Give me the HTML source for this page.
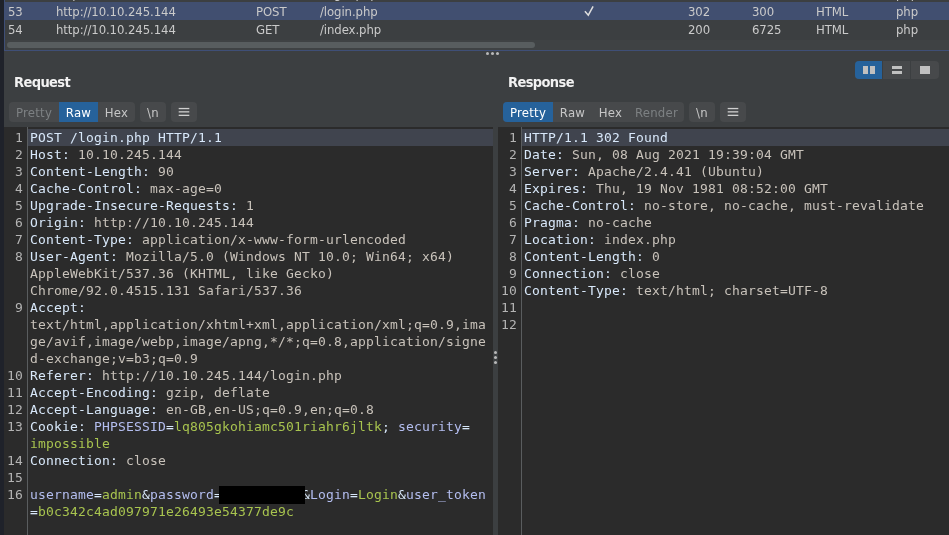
<!DOCTYPE html>
<html lang="en">
<head>
<meta charset="utf-8">
<title>Burp Suite - HTTP history</title>
<style>
html,body{margin:0;padding:0;}
body{width:949px;height:535px;overflow:hidden;position:relative;background:#3c3f41;
  font-family:"DejaVu Sans Condensed","DejaVu Sans","Liberation Sans",sans-serif;font-stretch:condensed;font-size:13px;color:#d4d4d4;}
#root{position:absolute;left:0;top:0;width:949px;height:535px;will-change:transform;}
.abs{position:absolute;}
#strip{left:0;top:0;width:4px;height:535px;background:#1f222a;}
/* history table */
#table{left:4px;top:0;width:945px;height:51px;box-sizing:border-box;border-left:1px solid #3f4f77;border-bottom:1px solid #3f4f77;overflow:hidden;}
.row{position:absolute;left:0;width:945px;height:18px;line-height:18px;white-space:nowrap;color:#cacaca;}
.row span{position:absolute;top:1px;letter-spacing:-0.08px;}
.row.sel{background:#414f70;}
.c1{left:3px}.c2{left:51px}.c3{left:251px}.c4{left:315px}.c5{left:579px}.c6{left:683px}.c7{left:747px}.c8{left:811px}.c9{left:891px}
#hthumb{left:2px;top:42px;width:528px;height:6px;border-radius:3px;background:#585d5f;}
/* titles */
.title{font-family:"DejaVu Sans Condensed","DejaVu Sans","Liberation Sans",sans-serif;font-weight:bold;font-size:14.5px;color:#f2f2f2;line-height:18px;letter-spacing:-0.62px;}
/* tabs */
.grp{position:absolute;top:102px;height:20px;border-radius:4px;background:#47494b;overflow:hidden;}
.grp span{position:absolute;top:0;height:20px;line-height:22px;text-align:center;color:#c6c6c6;font-size:13px;letter-spacing:0.25px;}
.grp span.on{background:#26629b;color:#ffffff;}
.grp span.dis{color:#7d8183;}
/* editors */
.ed{position:absolute;top:127px;height:408px;background:#2b2b2b;overflow:hidden;font-family:"DejaVu Sans Mono","Liberation Mono",monospace;font-size:13px;font-stretch:normal;letter-spacing:0.1733px;}
.gut{position:absolute;left:0;top:0;width:23px;height:408px;border-right:1px solid #5a5d5f;background:#2b2b2b;}
.ln{position:absolute;left:0;width:19px;text-align:right;height:17px;line-height:17px;color:#b4b4b4;}
.tl{position:absolute;left:26px;height:17px;line-height:17px;white-space:pre;color:#c8c2ba;}
.cur{position:absolute;left:24px;right:0;top:2px;height:17px;background:#40444e;}
.hb{position:absolute;left:7px;top:5px;}
.h{color:#d8e8fa;}
.n{color:#b4bef0;}
.v{color:#a8c44f;}
.blk{}
</style>
</head>
<body>
<div id="root">
<div id="strip" class="abs"></div>

<div id="table" class="abs">
  <div class="row" style="top:-16px"><span class="c1">52</span><span class="c2">http://10.10.245.144</span><span class="c3">GET</span><span class="c4">/login.php</span><span class="c6">200</span><span class="c7">1851</span><span class="c8">HTML</span><span class="c9">php</span></div>
  <div class="row sel" style="top:2px"><span class="c1">53</span><span class="c2">http://10.10.245.144</span><span class="c3">POST</span><span class="c4">/login.php</span><svg class="abs" style="left:575px;top:0;" width="20" height="18" viewBox="0 0 20 18" role="img" aria-label="✓"><title>✓</title><polyline points="4.9,9.3 8.3,13.2 13.1,4.3" fill="none" stroke="#dedede" stroke-width="1.5" stroke-linejoin="miter"/></svg><span class="c6">302</span><span class="c7">300</span><span class="c8">HTML</span><span class="c9">php</span></div>
  <div class="row" style="top:20px"><span class="c1">54</span><span class="c2">http://10.10.245.144</span><span class="c3">GET</span><span class="c4">/index.php</span><span class="c6">200</span><span class="c7">6725</span><span class="c8">HTML</span><span class="c9">php</span></div>
  <div class="abs" style="left:0;top:40px;width:945px;height:10px;background:#3f4244;"></div>
  <div id="hthumb" class="abs"></div>
</div>

<!-- splitter dots -->
<div class="abs" style="left:486px;top:52px;width:3px;height:3px;border-radius:2px;background:#b8b8b8;box-shadow:5px 0 0 #b8b8b8,10px 0 0 #b8b8b8;"></div>

<div class="abs title" style="left:14px;top:73px;">Request</div>
<div class="abs title" style="left:508px;top:73px;">Response</div>

<!-- layout buttons -->
<div class="abs" style="left:855px;top:61px;width:84px;height:18px;border-radius:4px;background:#47494b;overflow:hidden;">
  <div class="abs" style="left:0;top:0;width:27px;height:18px;background:#26629b;"></div>
  <div class="abs" style="left:27px;top:0;width:1px;height:18px;background:#3c3f41;"></div>
  <div class="abs" style="left:55px;top:0;width:1px;height:18px;background:#3c3f41;"></div>
  <div class="abs" style="left:8px;top:5px;width:5px;height:8px;background:#c0c0c0;"></div>
  <div class="abs" style="left:15px;top:5px;width:5px;height:8px;background:#c0c0c0;"></div>
  <div class="abs" style="left:37px;top:5px;width:10px;height:3px;background:#c0c0c0;"></div>
  <div class="abs" style="left:37px;top:10px;width:10px;height:3px;background:#c0c0c0;"></div>
  <div class="abs" style="left:65px;top:5px;width:10px;height:8px;background:#c0c0c0;"></div>
</div>

<!-- request tabs -->
<div class="grp" style="left:9px;width:126px;">
  <span class="dis" style="left:0;width:50px;">Pretty</span>
  <span class="on" style="left:50px;width:39px;">Raw</span>
  <span style="left:89px;width:37px;">Hex</span>
</div>
<div class="grp" style="left:140px;width:26px;"><span style="left:0;width:26px;">\n</span></div>
<div class="grp" style="left:171px;width:26px;"><span style="left:0;width:26px;"><svg class="hb" width="12" height="10" viewBox="0 0 12 10"><rect x="0.7" y="0.9" width="10.6" height="1.3" fill="#cfcfcf"/><rect x="0.7" y="4.2" width="10.6" height="1.3" fill="#cfcfcf"/><rect x="0.7" y="7.7" width="10.6" height="1.3" fill="#cfcfcf"/></svg></span></div>

<!-- response tabs -->
<div class="grp" style="left:503px;width:181px;">
  <span class="on" style="left:0;width:50px;">Pretty</span>
  <span style="left:50px;width:39px;">Raw</span>
  <span style="left:89px;width:37px;">Hex</span>
  <span class="dis" style="left:126px;width:55px;">Render</span>
</div>
<div class="grp" style="left:689px;width:26px;"><span style="left:0;width:26px;">\n</span></div>
<div class="grp" style="left:720px;width:26px;"><span style="left:0;width:26px;"><svg class="hb" width="12" height="10" viewBox="0 0 12 10"><rect x="0.7" y="0.9" width="10.6" height="1.3" fill="#cfcfcf"/><rect x="0.7" y="4.2" width="10.6" height="1.3" fill="#cfcfcf"/><rect x="0.7" y="7.7" width="10.6" height="1.3" fill="#cfcfcf"/></svg></span></div>

<!-- request editor -->
<div class="ed" id="req" style="left:4px;width:489px;">
  <div class="gut"></div>
  <div class="cur"></div>
<!--GEN:req-->
  <div class="ln" style="top:2px">1</div>
  <div class="tl" style="top:2px"><span class="h">POST /login.php HTTP/1.1</span></div>
  <div class="ln" style="top:19px">2</div>
  <div class="tl" style="top:19px"><span class="h">Host:</span> 10.10.245.144</div>
  <div class="ln" style="top:36px">3</div>
  <div class="tl" style="top:36px"><span class="h">Content-Length:</span> 90</div>
  <div class="ln" style="top:53px">4</div>
  <div class="tl" style="top:53px"><span class="h">Cache-Control:</span> max-age=0</div>
  <div class="ln" style="top:70px">5</div>
  <div class="tl" style="top:70px"><span class="h">Upgrade-Insecure-Requests:</span> 1</div>
  <div class="ln" style="top:87px">6</div>
  <div class="tl" style="top:87px"><span class="h">Origin:</span> http://10.10.245.144</div>
  <div class="ln" style="top:104px">7</div>
  <div class="tl" style="top:104px"><span class="h">Content-Type:</span> application/x-www-form-urlencoded</div>
  <div class="ln" style="top:121px">8</div>
  <div class="tl" style="top:121px"><span class="h">User-Agent:</span> Mozilla/5.0 (Windows NT 10.0; Win64; x64)</div>
  <div class="tl" style="top:138px">AppleWebKit/537.36 (KHTML, like Gecko)</div>
  <div class="tl" style="top:155px">Chrome/92.0.4515.131 Safari/537.36</div>
  <div class="ln" style="top:172px">9</div>
  <div class="tl" style="top:172px"><span class="h">Accept:</span></div>
  <div class="tl" style="top:189px">text/html,application/xhtml+xml,application/xml;q=0.9,ima</div>
  <div class="tl" style="top:206px">ge/avif,image/webp,image/apng,*/*;q=0.8,application/signe</div>
  <div class="tl" style="top:223px">d-exchange;v=b3;q=0.9</div>
  <div class="ln" style="top:240px">10</div>
  <div class="tl" style="top:240px"><span class="h">Referer:</span> http://10.10.245.144/login.php</div>
  <div class="ln" style="top:257px">11</div>
  <div class="tl" style="top:257px"><span class="h">Accept-Encoding:</span> gzip, deflate</div>
  <div class="ln" style="top:274px">12</div>
  <div class="tl" style="top:274px"><span class="h">Accept-Language:</span> en-GB,en-US;q=0.9,en;q=0.8</div>
  <div class="ln" style="top:291px">13</div>
  <div class="tl" style="top:291px"><span class="h">Cookie:</span> <span class="n">PHPSESSID</span><span class="h">=</span><span class="v">lq805gkohiamc501riahr6jltk</span><span class="h">; </span><span class="n">security</span><span class="h">=</span></div>
  <div class="tl" style="top:308px"><span class="v">impossible</span></div>
  <div class="ln" style="top:325px">14</div>
  <div class="tl" style="top:325px"><span class="h">Connection:</span> close</div>
  <div class="ln" style="top:342px">15</div>
  <div class="ln" style="top:359px">16</div>
  <div class="tl" style="top:359px"><span class="n">username</span><span class="h">=</span><span class="v">admin</span><span class="h">&amp;</span><span class="n">password</span><span class="h">=</span><span class="blk">          </span><span class="h">&amp;</span><span class="n">Login</span><span class="h">=</span><span class="v">Login</span><span class="h">&amp;</span><span class="n">user_token</span></div>
  <div class="tl" style="top:376px"><span class="h">=</span><span class="v">b0c342c4ad097971e26493e54377de9c</span></div>
<!--/GEN:req--><div class="abs" style="left:215px;top:359px;width:86px;height:18px;background:#000;z-index:3;"></div>
</div>

<!-- vertical splitter -->
<div class="abs" style="left:493px;top:127px;width:5px;height:408px;background:#3c3f41;"></div>
<div class="abs" style="left:494px;top:351px;width:3px;height:3px;border-radius:2px;background:#b8b8b8;box-shadow:0 5px 0 #b8b8b8,0 10px 0 #b8b8b8;"></div>

<!-- response editor -->
<div class="ed" id="res" style="left:498px;width:451px;">
  <div class="gut"></div>
  <div class="cur"></div>
<!--GEN:res-->
  <div class="ln" style="top:2px">1</div>
  <div class="tl" style="top:2px"><span class="h">HTTP/1.1 302 Found</span></div>
  <div class="ln" style="top:19px">2</div>
  <div class="tl" style="top:19px"><span class="h">Date:</span> Sun, 08 Aug 2021 19:39:04 GMT</div>
  <div class="ln" style="top:36px">3</div>
  <div class="tl" style="top:36px"><span class="h">Server:</span> Apache/2.4.41 (Ubuntu)</div>
  <div class="ln" style="top:53px">4</div>
  <div class="tl" style="top:53px"><span class="h">Expires:</span> Thu, 19 Nov 1981 08:52:00 GMT</div>
  <div class="ln" style="top:70px">5</div>
  <div class="tl" style="top:70px"><span class="h">Cache-Control:</span> no-store, no-cache, must-revalidate</div>
  <div class="ln" style="top:87px">6</div>
  <div class="tl" style="top:87px"><span class="h">Pragma:</span> no-cache</div>
  <div class="ln" style="top:104px">7</div>
  <div class="tl" style="top:104px"><span class="h">Location:</span> index.php</div>
  <div class="ln" style="top:121px">8</div>
  <div class="tl" style="top:121px"><span class="h">Content-Length:</span> 0</div>
  <div class="ln" style="top:138px">9</div>
  <div class="tl" style="top:138px"><span class="h">Connection:</span> close</div>
  <div class="ln" style="top:155px">10</div>
  <div class="tl" style="top:155px"><span class="h">Content-Type:</span> text/html; charset=UTF-8</div>
  <div class="ln" style="top:172px">11</div>
  <div class="ln" style="top:189px">12</div>
<!--/GEN:res--></div>
</div>
</body>
</html>
